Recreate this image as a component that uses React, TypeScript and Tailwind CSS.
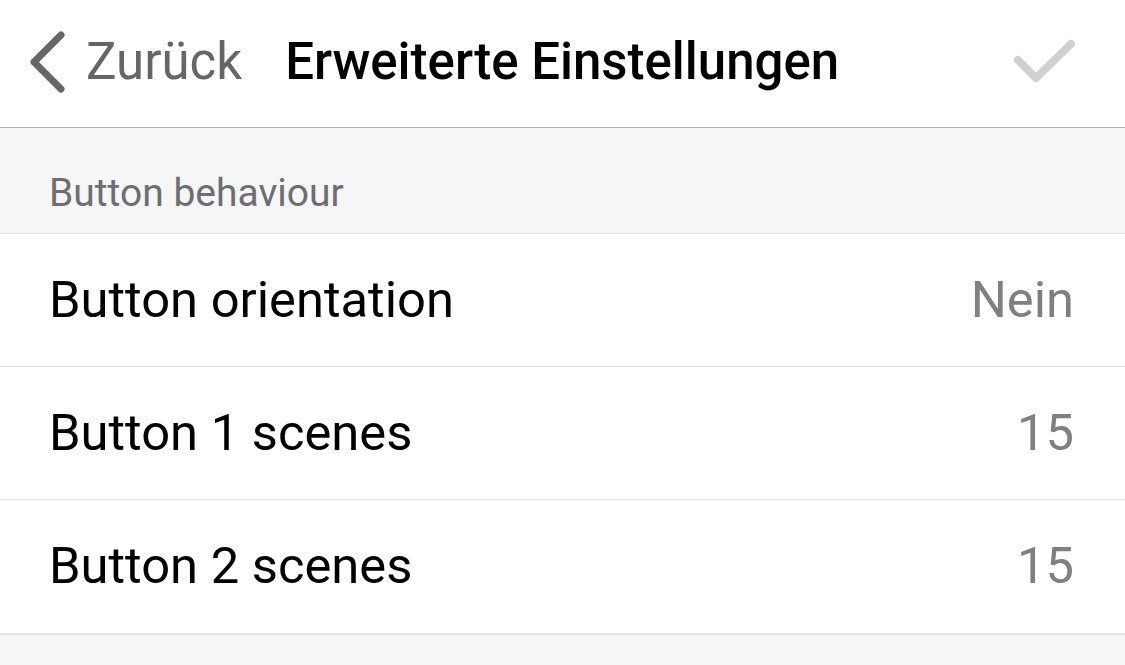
import React from 'react';

const rows = [
  { label: 'Button orientation', value: 'Nein' },
  { label: 'Button 1 scenes', value: '15' },
  { label: 'Button 2 scenes', value: '15' },
];

const App: React.FC = () => {
  return (
    <div className="min-h-screen bg-[#f6f6f6] font-['Roboto',sans-serif]">
      <header className="h-[128px] bg-white border-b border-[#b3b3b3] flex items-center pl-[28px] pr-[48px] pb-[4px]">
        <div className="flex items-center text-[#666666]">
          <svg width="38" height="64" viewBox="0 0 38 64" className="mr-[20px]">
            <path d="M33 5 L6 32 L33 59" fill="none" stroke="#666666" strokeWidth="7" strokeLinecap="round" strokeLinejoin="round" />
          </svg>
          <span className="text-[51px] leading-none">Zurück</span>
        </div>
        <h1 className="ml-[43px] text-[51px] leading-none font-medium text-black">Erweiterte Einstellungen</h1>
        <div className="ml-auto">
          <svg width="64" height="48" viewBox="0 0 64 48">
            <path d="M5 22 L23 40 L58 6" fill="none" stroke="#d0d0d0" strokeWidth="8" strokeLinecap="round" strokeLinejoin="round" />
          </svg>
        </div>
      </header>

      <div className="h-[106px] flex items-end pb-[20px] px-[49px] border-b border-[#e3e3e3]">
        <span className="text-[39px] leading-none text-[#6d6d72]">Button behaviour</span>
      </div>

      <div className="bg-white border-b-2 border-[#e3e3e3]">
        {rows.map((r, i) => (
          <div
            key={r.label}
            className={`h-[133px] flex items-center justify-between pl-[49px] pr-[51px] ${i < rows.length - 1 ? 'border-b border-[#e3e3e3]' : ''}`}
          >
            <span className="text-[50.7px] leading-none text-black">{r.label}</span>
            <span className="text-[50.7px] leading-none text-[#808080]">{r.value}</span>
          </div>
        ))}
      </div>
    </div>
  );
};

export default App;
